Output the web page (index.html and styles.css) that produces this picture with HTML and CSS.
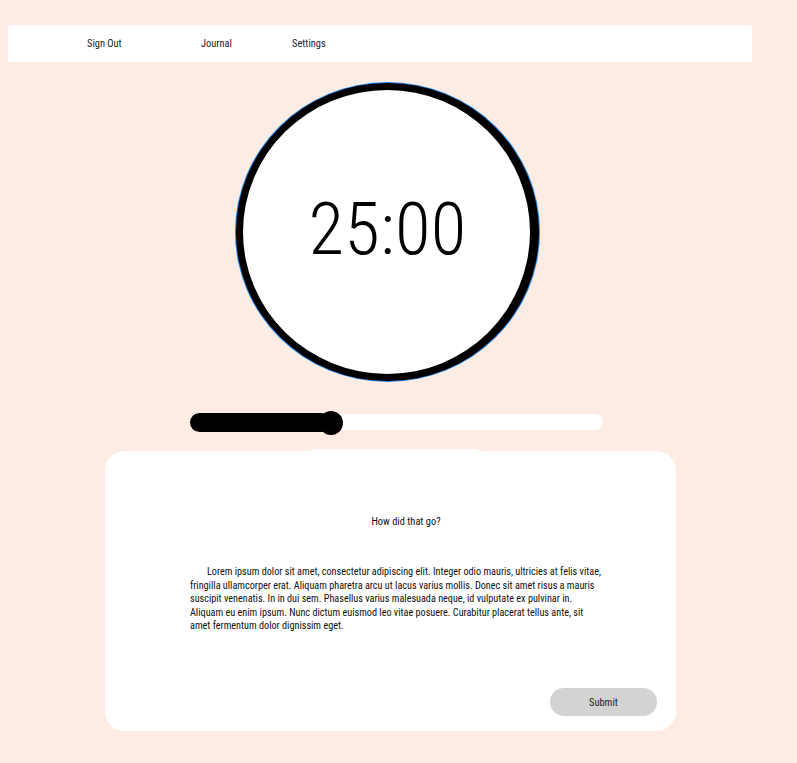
FILE: index.html
```html
<!DOCTYPE html>
<html lang="en">
<head>
<meta charset="utf-8">
<title>Pomodoro</title>
<link rel="stylesheet" href="styles.css">
</head>
<body>
<nav class="nav">
  <a class="nav-link" href="#">Sign Out</a>
  <a class="nav-link" href="#">Journal</a>
  <a class="nav-link" href="#">Settings</a>
</nav>
<main class="main">
  <div class="dial">
    <span class="time">25:00</span>
  </div>
  <div class="slider">
    <div class="slider-fill" style="width:141px"></div>
    <div class="slider-thumb" style="left:129px"></div>
  </div>
  <section class="card-wrap">
    <div class="card-tab"></div>
    <div class="card">
      <p class="question">How did that go?</p>
      <p class="entry">Lorem ipsum dolor sit amet, consectetur adipiscing elit. Integer odio mauris, ultricies at felis vitae, fringilla ullamcorper erat. Aliquam pharetra arcu ut lacus varius mollis. Donec sit amet risus a mauris suscipit venenatis. In in dui sem. Phasellus varius malesuada neque, id vulputate ex pulvinar in. Aliquam eu enim ipsum. Nunc dictum euismod leo vitae posuere. Curabitur placerat tellus ante, sit amet fermentum dolor dignissim eget.</p>
      <div class="actions">
        <button class="submit" type="button">Submit</button>
      </div>
    </div>
  </section>
</main>
</body>
</html>
```
FILE: styles.css
```css
html, body {
  background: #fdece4;
}
body {
  margin: 8px;
  font-family: "Roboto Condensed", "Liberation Sans", sans-serif;
  color: #111;
}
.nav {
  margin-top: 17px;
  width: 744px;
  height: 37px;
  background: #fff;
  display: grid;
  grid-template-columns: 114px 91px auto;
  align-items: center;
  padding-left: 79px;
  box-sizing: border-box;
}
.nav-link {
  font-size: 10.4px;
  color: #222;
  text-decoration: none;
  justify-self: start;
}
.main {
  display: flex;
  flex-direction: column;
}
.dial {
  margin: 21px 0 0 228px;
  width: 303px;
  height: 298px;
  box-sizing: border-box;
  border: 7px solid #000;
  border-right-width: 9px;
  border-radius: 50%;
  background: #fff;
  box-shadow: 0 0 0 1px #1d86e6;
  display: flex;
  align-items: center;
  justify-content: center;
}
.time {
  font-size: 73px;
  font-weight: 300;
  color: #000;
  margin: 0 0 6px 2px;
  letter-spacing: 0.3px;
}
.slider {
  position: relative;
  margin: 33px 0 0 182px;
  width: 413px;
  height: 16px;
  border-radius: 8px;
  background: #fff;
}
.slider-fill {
  position: absolute;
  left: 0;
  top: -1px;
  height: 19px;
  border-radius: 10px;
  background: #000;
}
.slider-thumb {
  position: absolute;
  top: -3px;
  width: 24px;
  height: 24px;
  border-radius: 50%;
  background: #000;
}
.card-wrap {
  position: relative;
  margin: 21px 0 0 97px;
  width: 571px;
}
.card-tab {
  position: absolute;
  left: 200px;
  top: -2px;
  width: 180px;
  height: 20px;
  border-radius: 10px;
  background: #fff;
}
.card {
  position: relative;
  height: 280px;
  box-sizing: border-box;
  background: #fff;
  border-radius: 20px;
  padding: 64px 19px 15px 85px;
  display: flex;
  flex-direction: column;
}
.question {
  margin: 0;
  width: 413px;
  text-align: center;
  padding-left: 19px;
  box-sizing: border-box;
  font-size: 10.4px;
  line-height: 13px;
  color: #111;
}
.entry {
  margin: 37px 0 0;
  width: 413px;
  font-size: 10.2px;
  line-height: 13.5px;
  text-indent: 17px;
  color: #111;
}
.actions {
  margin-top: auto;
  display: flex;
  justify-content: flex-end;
}
.submit {
  width: 107px;
  height: 28px;
  border: none;
  border-radius: 14px;
  background: #d3d3d3;
  font-family: "Roboto Condensed", "Liberation Sans", sans-serif;
  font-size: 10.4px;
  color: #222;
  padding: 0;
}
```
